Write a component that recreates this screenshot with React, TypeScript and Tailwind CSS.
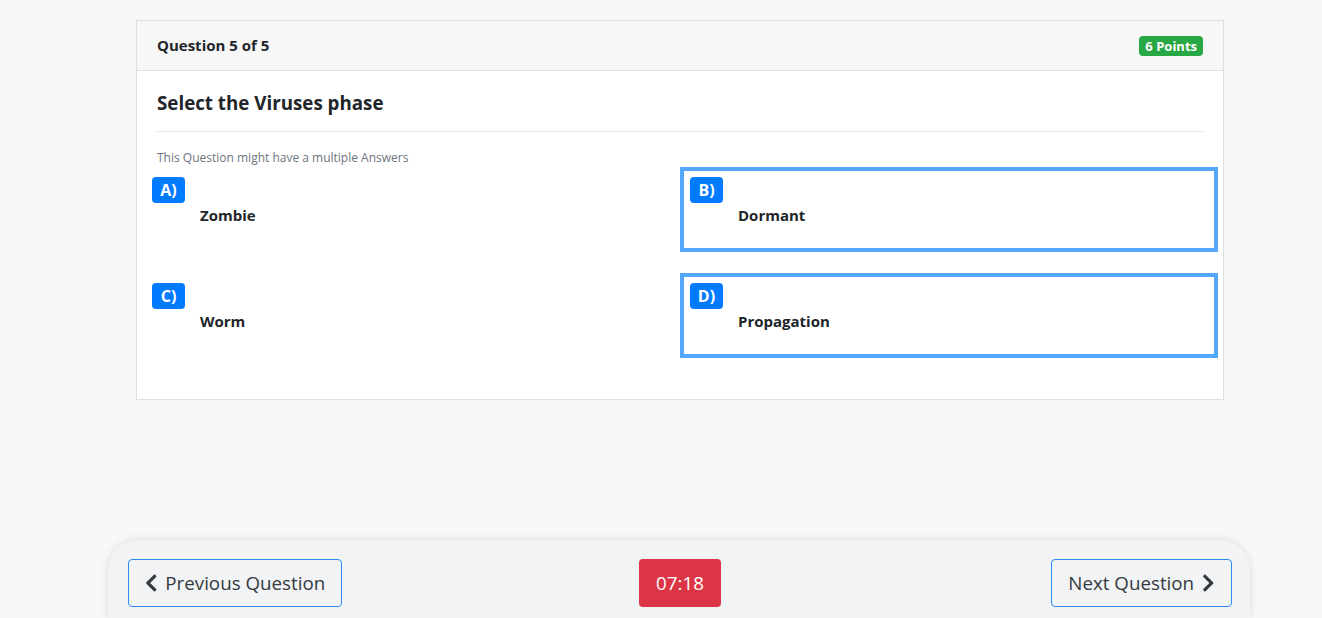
const options = [
  { key: "A)", label: "Zombie", selected: false },
  { key: "B)", label: "Dormant", selected: true },
  { key: "C)", label: "Worm", selected: false },
  { key: "D)", label: "Propagation", selected: true },
]

function ChevronLeft() {
  return (
    <svg viewBox="0 0 320 512" className="h-5 w-[12.5px] fill-[#343a40]">
      <path d="M34.52 239.03L228.87 44.69c9.37-9.37 24.57-9.37 33.94 0l22.67 22.67c9.36 9.36 9.37 24.52.04 33.9L131.49 256l154.02 154.75c9.34 9.38 9.32 24.54-.04 33.9l-22.67 22.67c-9.37 9.37-24.57 9.37-33.94 0L34.52 272.97c-9.37-9.37-9.37-24.57 0-33.94z" />
    </svg>
  )
}

function ChevronRight() {
  return (
    <svg viewBox="0 0 320 512" className="h-5 w-[12.5px] fill-[#343a40]">
      <path d="M285.476 272.971L91.132 467.314c-9.373 9.373-24.569 9.373-33.941 0l-22.667-22.667c-9.357-9.357-9.375-24.522-.04-33.901L188.505 256 34.484 101.255c-9.335-9.379-9.317-24.544.04-33.901l22.667-22.667c9.373-9.373 24.569-9.373 33.941 0L285.475 239.03c9.373 9.372 9.373 24.568.001 33.941z" />
    </svg>
  )
}

export default function App() {
  return (
    <div className="flex h-[618px] flex-col overflow-hidden bg-[#f7f8fa] font-['Open_Sans',sans-serif] text-[#212529]">
      <div className="ml-[136px] mt-5 w-[1088px] border border-[#dfdfdf] bg-white">
        <div className="flex h-[50px] items-center justify-between border-b border-[#dfdfdf] bg-[#f7f7f7] px-5">
          <span className="text-[15px] font-bold">Question 5 of 5</span>
          <span className="rounded-[4px] bg-[#28a745] px-[6px] py-[2px] text-[13px] font-bold leading-4 text-white">
            6 Points
          </span>
        </div>

        <div className="px-[5px] pb-[41px] pt-5">
          <div className="px-[15px]">
            <h5 className="text-[18.75px] font-bold leading-6">Select the Viruses phase</h5>
            <hr className="mb-[17px] mt-4 border-[#e4e4e4]" />
            <p className="text-[12px] leading-[18px] text-[#6c757d]">
              This Question might have a multiple Answers
            </p>
          </div>

          <div className="grid grid-cols-2 gap-y-[21px]">
            {options.map((opt) => (
              <div
                key={opt.key}
                className={
                  "h-[85px] border-4 p-[6px] " +
                  (opt.selected ? "border-[#54a8fb]" : "border-transparent")
                }
              >
                <span className="inline-flex h-[26px] w-[33px] items-center justify-center rounded-[4px] bg-[#007bff] text-[16px] font-bold text-white">
                  {opt.key}
                </span>
                <div className="ml-12 mt-[2px] text-[15px] font-bold leading-5">{opt.label}</div>
              </div>
            ))}
          </div>
        </div>
      </div>

      <div className="ml-[108px] mt-auto grid h-[78px] w-[1142px] grid-cols-[1fr_auto_1fr] items-start rounded-t-[30px] bg-[#f2f3f5] pl-[21px] pr-[19px] pt-[19px] shadow-[0_0_8px_rgba(0,0,0,0.12)]">
        <button
          type="button"
          className="ml-[-1px] flex h-12 w-[214px] items-center justify-center gap-2 justify-self-start rounded-[4px] border border-[#2f8cff] text-[18.75px] text-[#343a40]"
        >
          <ChevronLeft />
          Previous Question
        </button>
        <div className="flex h-12 w-[82px] items-center justify-center rounded-[4px] bg-[#dc3545] text-[18.75px] text-white">
          07:18
        </div>
        <button
          type="button"
          className="mr-[-1px] flex h-12 w-[181px] items-center justify-center gap-2 justify-self-end rounded-[4px] border border-[#2f8cff] text-[18.75px] text-[#343a40]"
        >
          Next Question
          <ChevronRight />
        </button>
      </div>
    </div>
  )
}
